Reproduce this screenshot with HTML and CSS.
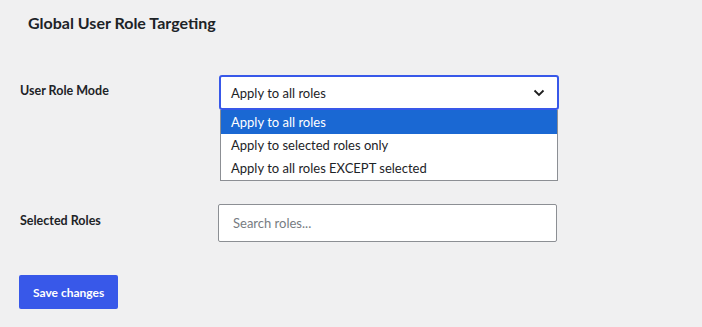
FILE: index.html
```html
<!DOCTYPE html>
<html>
<head>
  <title>Global User Role Targeting</title>
  <link rel="stylesheet" href="styles.css">
</head>
<body>
  <div class="wrap">
    <h2 class="section-title">Global User Role Targeting</h2>

    <div class="form-row">
      <div class="form-label">User Role Mode</div>
      <div class="form-field">
        <div class="select-box">
          <span>Apply to all roles</span>
          <svg class="chevron" width="12" height="8" viewBox="0 0 12 8">
            <path d="M1.5 1.5 L6 6 L10.5 1.5" fill="none" stroke="#1e1e1e" stroke-width="1.8"/>
          </svg>
        </div>
        <ul class="select-menu">
          <li class="select-option active">Apply to all roles</li>
          <li class="select-option">Apply to selected roles only</li>
          <li class="select-option">Apply to all roles EXCEPT selected</li>
        </ul>
      </div>
    </div>

    <div class="form-row roles-row">
      <div class="form-label">Selected Roles</div>
      <div class="form-field">
        <input class="search-input" type="text" placeholder="Search roles...">
      </div>
    </div>

    <button class="btn-save">Save changes</button>
  </div>
</body>
</html>
```

FILE: styles.css
```css
body {
  margin: 0;
  background-color: #F0F0F1;
  font-family: Lato, "Noto Sans", sans-serif;
  font-size: 13px;
  color: #1D2327;
}

.wrap {
  padding: 12px 20px;
}

.section-title {
  margin: 0 0 0 8px;
  font-size: 16px;
  font-weight: 700;
  line-height: 22px;
  color: #1D2327;
}

.form-row {
  display: flex;
  margin-top: 41px;
}

.form-label {
  width: 199px;
  padding-top: 6px;
  font-size: 12.5px;
  font-weight: 700;
  line-height: 20px;
}

.form-field {
  width: 340px;
}

.select-box {
  display: flex;
  align-items: center;
  justify-content: space-between;
  height: 31px;
  padding: 0 12px 0 10px;
  background-color: #FFFFFF;
  border: 2px solid #3858E9;
  border-radius: 3px;
  font-size: 13px;
}

.chevron {
  display: block;
}

.select-menu {
  list-style-type: none;
  margin: 0 1px;
  padding: 0;
  background-color: #FFFFFF;
  border: 1px solid #8C8F94;
  border-top: none;
  font-size: 13px;
}

.select-option {
  height: 23px;
  line-height: 23px;
  padding-left: 10px;
}

.select-option.active {
  height: 24px;
  line-height: 24px;
  background-color: #1A68D3;
  color: #FFFFFF;
}

.roles-row {
  margin-top: 23px;
}

.roles-row .form-label {
  padding-top: 7px;
}

.search-input {
  box-sizing: border-box;
  width: 339px;
  height: 38px;
  margin-left: -1px;
  padding: 0 14px;
  background-color: #FFFFFF;
  border: 1px solid #8C8F94;
  border-radius: 2px;
  font-family: inherit;
  font-size: 13px;
  color: #1D2327;
}

.search-input::placeholder {
  color: #777C82;
}

.btn-save {
  display: block;
  margin-top: 33px;
  margin-left: -1px;
  padding: 0 14px;
  height: 34px;
  background-color: #3858E9;
  color: #FFFFFF;
  border: none;
  border-radius: 2px;
  font-family: inherit;
  font-size: 12px;
  font-weight: 700;
  cursor: pointer;
}
```
